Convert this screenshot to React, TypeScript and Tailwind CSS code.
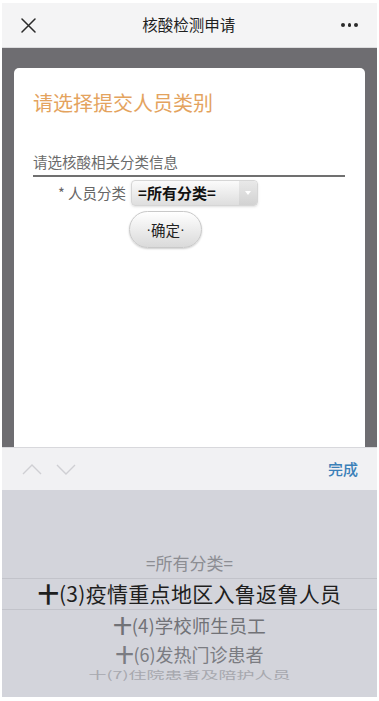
import React from 'react';

// 核酸检测申请 — 选择人员类别 + iOS 选择器
const FONT = { fontFamily: '"Noto Sans CJK SC", "Noto Sans", sans-serif' };

export default function App() {
  return (
    <div style={FONT} className="w-[379px] h-[701px] bg-white pt-[3px] px-[2px] pb-[4px] flex flex-col overflow-hidden">
      {/* 顶部导航 */}
      <div className="h-[45px] shrink-0 bg-[#f4f4f5] border-b border-[#dcdcde] flex items-center justify-between pl-[19px] pr-[19px]">
        <svg width="15" height="15" viewBox="0 0 15 15" className="text-[#2a2a2a]">
          <path d="M1 1 L14 14 M14 1 L1 14" stroke="currentColor" strokeWidth="1.5" strokeLinecap="round" />
        </svg>
        <span className="text-[15.5px] text-[#1f1f1f] leading-none">核酸检测申请</span>
        <span className="flex gap-[3px] items-center">
          <span className="w-[3.5px] h-[3.5px] rounded-full bg-[#2a2a2a]"></span>
          <span className="w-[3.5px] h-[3.5px] rounded-full bg-[#2a2a2a]"></span>
          <span className="w-[3.5px] h-[3.5px] rounded-full bg-[#2a2a2a]"></span>
        </span>
      </div>

      {/* 遮罩 + 白卡片 */}
      <div className="h-[399px] shrink-0 bg-[#6e6d71] px-[12px] pt-[20px] flex">
        <div className="flex-1 bg-white rounded-t-[5px] pl-[19px] pr-[20px] pt-[21px]">
          <div className="text-[20px] leading-[28px] text-[#e4a35e]">请选择提交人员类别</div>

          <div className="mt-[35px] border-b-2 border-[#707070] pb-[3px]">
            <div className="text-[14.5px] leading-[20px] text-[#6b6b6b]">请选核酸相关分类信息</div>
          </div>

          <div className="mt-[3px] ml-[25px] flex items-center gap-[5px]">
            <span className="text-[14.5px] text-[#666]">* 人员分类</span>
            <div className="w-[127px] h-[26px] rounded-[4px] border border-[#d6d6d6] bg-gradient-to-b from-[#fbfbfb] to-[#dedede] flex items-center shadow-sm">
              <span className="flex-1 pl-[6px] text-[15px] font-bold text-[#111]">=所有分类=</span>
              <span className="w-[18px] h-full flex items-center justify-center bg-gradient-to-b from-[#e9e9e9] to-[#d2d2d2] rounded-r-[4px]">
                <svg width="6" height="4" viewBox="0 0 6 4"><path d="M0 0 L6 0 L3 4 Z" fill="#ffffff" /></svg>
              </span>
            </div>
          </div>

          <button className="mt-[5px] ml-[96px] w-[73px] h-[37px] rounded-full border border-[#c9c9c9] bg-gradient-to-b from-white to-[#dadada] shadow-[0_1px_2px_rgba(0,0,0,0.2)] text-[14.5px] text-[#222] flex items-center justify-center">
            <span className="font-['Liberation_Sans']">·</span>确定<span className="font-['Liberation_Sans']">·</span>
          </button>
        </div>
      </div>

      {/* 键盘工具栏 */}
      <div className="h-[43px] shrink-0 bg-[#f1f1f3] border-t border-[#d8d8dc] flex items-center justify-between pl-[20px] pr-[19px]">
        <div className="flex items-center gap-[14px]">
          <svg width="20" height="11" viewBox="0 0 20 11"><path d="M1 10 L10 1 L19 10" fill="none" stroke="#cfcfd3" strokeWidth="1.4" /></svg>
          <svg width="20" height="11" viewBox="0 0 20 11"><path d="M1 1 L10 10 L19 1" fill="none" stroke="#cfcfd3" strokeWidth="1.4" /></svg>
        </div>
        <span className="text-[15px] font-medium text-[#3b80b8]">完成</span>
      </div>

      {/* 选择器 */}
      <div className="h-[207px] shrink-0 bg-[#d3d4db] flex flex-col pt-[62px]">
        <div className="h-[22px] flex items-center justify-center text-[17px] text-[#8c8d93]">=所有分类=</div>
        <div className="mt-[4px] h-[32px] border-y border-[#c2c3ca] flex items-center justify-center text-[21px] text-[#1e1e1e] tracking-[0.3px]">
          <span className="font-bold">十</span>(3)疫情重点地区入鲁返鲁人员
        </div>
        <div className="h-[32px] flex items-center justify-center text-[18.5px] text-[#717277]">
          <span className="font-bold">十</span>(4)学校师生员工
        </div>
        <div className="h-[24px] flex items-center justify-center text-[18px] text-[#7b7c82]">
          <span className="font-bold">十</span>(6)发热门诊患者
        </div>
        <div className="h-[16px] flex items-center justify-center text-[18px] text-[#a7a8ae] scale-y-[0.6]">十(7)住院患者及陪护人员</div>
      </div>
    </div>
  );
}
